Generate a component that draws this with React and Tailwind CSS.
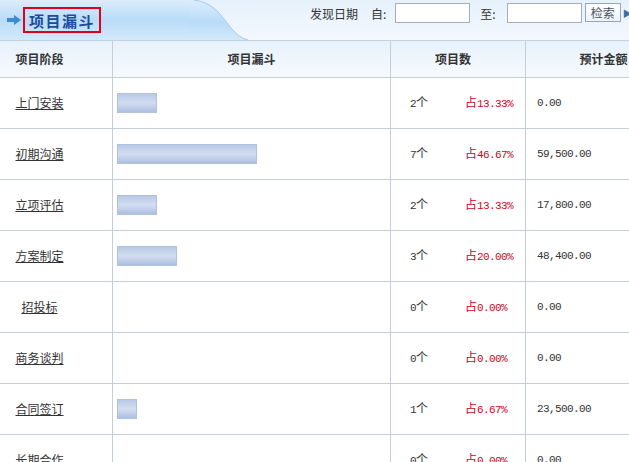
const rows = [
  { stage: '上门安装', count: 2, pct: '13.33%', amount: '0.00' },
  { stage: '初期沟通', count: 7, pct: '46.67%', amount: '59,500.00' },
  { stage: '立项评估', count: 2, pct: '13.33%', amount: '17,800.00' },
  { stage: '方案制定', count: 3, pct: '20.00%', amount: '48,400.00' },
  { stage: '招投标', count: 0, pct: '0.00%', amount: '0.00' },
  { stage: '商务谈判', count: 0, pct: '0.00%', amount: '0.00' },
  { stage: '合同签订', count: 1, pct: '6.67%', amount: '23,500.00' },
  { stage: '长期合作', count: 0, pct: '0.00%', amount: '0.00' },
]

const ArrowIcon = () => (
  <svg width="14" height="10" viewBox="0 0 14 10">
    <rect x="0" y="3" width="8" height="4" fill="#3b8bd0" />
    <path d="M7 0 L14 5 L7 10 Z" fill="#3b8bd0" />
  </svg>
)

const Curve = () => (
  <svg width="60" height="40" viewBox="0 0 60 40" className="block shrink-0">
    <defs>
      <linearGradient id="tabg" x1="0" y1="0" x2="0" y2="1">
        <stop offset="0" stopColor="#dcedfc" />
        <stop offset="0.55" stopColor="#b9dcf8" />
        <stop offset="1" stopColor="#d3e9fb" />
      </linearGradient>
    </defs>
    <path d="M0 0 L4 0 C22 2 30 14 38 24 C44 32 50 38 58 40 L0 40 Z" fill="url(#tabg)" />
    <path d="M4 0 C22 2 30 14 38 24 C44 32 50 38 58 40" fill="none" stroke="#a6cbea" strokeWidth="1" />
  </svg>
)

const num = "font-['Liberation_Mono',monospace] text-[11px] tracking-[-0.6px]"

const App = () => {
  return (
    <div className="w-[629px] h-[462px] overflow-hidden bg-white text-[12px] text-[#333] font-['Noto_Sans_CJK_SC','Noto_Sans',sans-serif]">
      <div className="flex h-[41px] border-b border-[#c4d2e2] bg-linear-to-b from-[#e6f1fb] to-[#f3f8fe]">
        <div className="flex w-[190px] shrink-0 items-center pl-[7px] bg-linear-to-b from-[#dcedfc] via-[#b9dcf8] to-[#d3e9fb]">
          <ArrowIcon />
          <div className="ml-[2px] flex h-[26px] items-center border-2 border-[#e3001b] px-[4px] text-[15px] font-bold tracking-[1.5px] text-[#1b4d9e] leading-none">
            项目漏斗
          </div>
        </div>
        <Curve />
        <div className="ml-[60px] flex shrink-0 items-start pt-[3px] text-[12px] text-[#333]">
          <span className="mt-[2px]">发现日期</span>
          <span className="ml-[13px] mt-[2px]">自:</span>
          <input className="ml-[9px] h-[20px] w-[75px] border border-[#a7adb5] bg-white" />
          <span className="ml-[10px] mt-[2px]">至:</span>
          <input className="ml-[11px] h-[20px] w-[75px] border border-[#a7adb5] bg-white" />
          <button className="ml-[3px] h-[19px] w-[36px] border border-[#93a6bf] bg-linear-to-b from-white to-[#eef3f9] text-[12px] leading-none text-[#4a5563]">
            检索
          </button>
          <span className="ml-[2px] mt-[4px] text-[9px] text-[#3d6aa8]">▶</span>
        </div>
      </div>

      <div className="grid w-[800px] grid-cols-[113px_278px_135px_156px_118px]">
        {['项目阶段', '项目漏斗', '项目数', '预计金额', ''].map((h, i) => (
          <div
            key={i}
            className={`flex h-[37px] items-center border-b border-r border-[#c6cdda] bg-linear-to-b from-[#e7f1fb] to-[#f6fafe] font-bold text-[#333] ${
              i === 0 ? 'pr-[33px] justify-center' : i === 2 ? 'justify-center pr-[10px]' : 'justify-center'
            }`}
          >
            {h}
          </div>
        ))}

        {rows.map(row => (
          <div key={row.stage} className="contents">
            <div className="flex h-[51px] items-center justify-center border-b border-r border-[#c6cdda] pr-[33px]">
              <a href="#" className="underline text-[#333]">{row.stage}</a>
            </div>
            <div className="flex h-[51px] items-center border-b border-r border-[#c6cdda] pl-[4px]">
              {row.count > 0 && (
                <div
                  className="h-[20px] border border-[#b2c2dd] bg-linear-to-b from-[#b9c9e6] via-[#d2ddf1] to-[#aebfe0]"
                  style={{ width: row.count * 20 }}
                />
              )}
            </div>
            <div className="flex h-[51px] items-center border-b border-r border-[#c6cdda] pl-[19px]">
              <span className="w-[55px]">
                <span className={num}>{row.count}</span>个
              </span>
              <span className="text-[#d0021b]">
                占<span className={num}>{row.pct}</span>
              </span>
            </div>
            <div className="flex h-[51px] items-center border-b border-r border-[#c6cdda] pl-[11px]">
              <span className={num}>{row.amount}</span>
            </div>
            <div className="h-[51px] border-b border-[#c6cdda]" />
          </div>
        ))}
      </div>
    </div>
  )
}

export default App
